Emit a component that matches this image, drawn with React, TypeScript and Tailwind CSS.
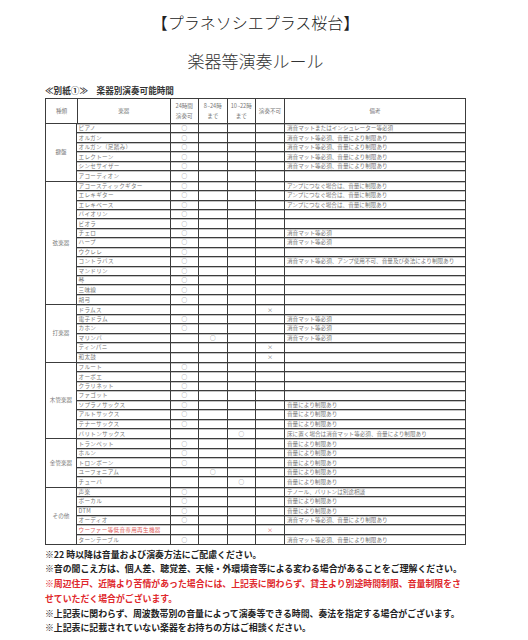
import type { ReactElement } from "react";

type Row = {
  name: string;
  slot?: 0 | 1 | 2; // 0: 24h, 1: 8~24, 2: 10~22
  ng?: boolean;
  note?: string;
  red?: boolean;
};

type Group = { label: string; rows: Row[] };

const MUTE = "消音マット等必須、音量により制限あり";
const AMP = "アンプにつなぐ場合は、音量に制限あり";
const VOL = "音量により制限あり";

const GROUPS: Group[] = [
  {
    label: "鍵盤",
    rows: [
      { name: "ピアノ", slot: 0, note: "消音マットまたはインシュレーター等必須" },
      { name: "オルガン", slot: 0, note: MUTE },
      { name: "オルガン（足踏み）", slot: 0, note: MUTE },
      { name: "エレクトーン", slot: 0, note: MUTE },
      { name: "シンセサイザー", slot: 0, note: MUTE },
      { name: "アコーディオン", slot: 0 },
    ],
  },
  {
    label: "弦楽器",
    rows: [
      { name: "アコースティックギター", slot: 0, note: AMP },
      { name: "エレキギター", slot: 0, note: AMP },
      { name: "エレキベース", slot: 0, note: AMP },
      { name: "バイオリン", slot: 0 },
      { name: "ビオラ", slot: 0 },
      { name: "チェロ", slot: 0, note: "消音マット等必須" },
      { name: "ハープ", slot: 0, note: "消音マット等必須" },
      { name: "ウクレレ", slot: 0 },
      { name: "コントラバス", slot: 0, note: "消音マット等必須、アンプ使用不可、音量及び奏法により制限あり" },
      { name: "マンドリン", slot: 0 },
      { name: "琴", slot: 0 },
      { name: "三味線", slot: 0 },
      { name: "胡弓", slot: 0 },
    ],
  },
  {
    label: "打楽器",
    rows: [
      { name: "ドラムス", ng: true },
      { name: "電子ドラム", slot: 0, note: "消音マット等必須" },
      { name: "カホン", slot: 0, note: "消音マット等必須" },
      { name: "マリンバ", slot: 1, note: "消音マット等必須" },
      { name: "ティンパニ", ng: true },
      { name: "和太鼓", ng: true },
    ],
  },
  {
    label: "木管楽器",
    rows: [
      { name: "フルート", slot: 0 },
      { name: "オーボエ", slot: 0 },
      { name: "クラリネット", slot: 0 },
      { name: "ファゴット", slot: 0 },
      { name: "ソプラノサックス", slot: 0, note: VOL },
      { name: "アルトサックス", slot: 0, note: VOL },
      { name: "テナーサックス", slot: 0, note: VOL },
      { name: "バリトンサックス", slot: 2, note: "床に置く場合は消音マット等必須、音量により制限あり" },
    ],
  },
  {
    label: "金管楽器",
    rows: [
      { name: "トランペット", slot: 0, note: VOL },
      { name: "ホルン", slot: 0, note: VOL },
      { name: "トロンボーン", slot: 0, note: VOL },
      { name: "ユーフォニアム", slot: 1, note: VOL },
      { name: "チューバ", slot: 2, note: VOL },
    ],
  },
  {
    label: "その他",
    rows: [
      { name: "声楽", slot: 0, note: "テノール、バリトンは別途相談" },
      { name: "ボーカル", slot: 0, note: VOL },
      { name: "DTM", slot: 0, note: VOL },
      { name: "オーディオ", slot: 0, note: MUTE },
      { name: "ウーファー等低音専用再生機器", ng: true, red: true },
      { name: "ターンテーブル", slot: 0, note: MUTE },
    ],
  },
];

const COLS = "grid grid-cols-[92.5px_28.5px_28.5px_28.5px_29px_1fr]";

function Mark({ show, glyph, red }: { show: boolean; glyph: string; red?: boolean }): ReactElement {
  return (
    <div
      className={`flex items-center justify-center border-l border-[#3c3c3c] text-[5.6px] leading-[8px] ${
        red ? "text-[#e06060]" : "text-[#7a7a7a]"
      }`}
    >
      {show ? glyph : ""}
    </div>
  );
}

function InstrumentRow({ row }: { row: Row }): ReactElement {
  return (
    <div
      className={`${COLS} h-[9.45px] border-b border-[#3c3c3c] shadow-[inset_0_1px_0_#c4c4c4] last:border-b-0`}
    >
      <div
        className={`flex items-center pl-[1.5px] text-[5.6px] leading-[8px] tracking-[0.3px] whitespace-nowrap ${
          row.red ? "text-[#e06060]" : "text-[#777]"
        }`}
      >
        {row.name}
      </div>
      <Mark show={row.slot === 0} glyph="○" />
      <Mark show={row.slot === 1} glyph="○" />
      <Mark show={row.slot === 2} glyph="○" />
      <Mark show={!!row.ng} glyph="×" red={row.red} />
      <div className="flex items-center border-l border-[#3c3c3c] pl-[2px] text-[5.6px] leading-[8px] text-[#777] whitespace-nowrap">
        {row.note ?? ""}
      </div>
    </div>
  );
}

function HeaderCell({ children, first }: { children: React.ReactNode; first?: boolean }): ReactElement {
  return (
    <div
      className={`flex flex-col items-center justify-center text-center text-[5.6px] leading-[10px] text-[#777] ${
        first ? "" : "border-l border-[#3c3c3c]"
      }`}
    >
      {children}
    </div>
  );
}

export default function App(): ReactElement {
  return (
    <div
      className="min-h-[640px] w-[528px] bg-white text-[#222]"
      style={{ fontFamily: '"Noto Sans CJK JP", "Noto Sans", sans-serif' }}
    >
      <div className="ml-[45px] w-[421px] pt-[12px]">
        <h1 className="text-center text-[16px] leading-[20px] font-light text-[#222]">【プラネソシエプラス桜台】</h1>
        <h2 className="mt-[18px] text-center text-[17px] leading-[22px] font-light text-[#333]">楽器等演奏ルール</h2>
        <p className="mt-[12px] text-[8.6px] leading-[12px] font-bold text-[#333]">≪別紙①≫　楽器別演奏可能時間</p>

        <div className="mt-[2px] border border-[#3c3c3c]">
          <div className="grid h-[25px] grid-cols-[31px_92.5px_28.5px_28.5px_28.5px_29px_1fr] border-b border-[#3c3c3c]">
            <HeaderCell first>種類</HeaderCell>
            <HeaderCell>楽器</HeaderCell>
            <HeaderCell>
              <span>24時間</span>
              <span>演奏可</span>
            </HeaderCell>
            <HeaderCell>
              <span>8~24時</span>
              <span>まで</span>
            </HeaderCell>
            <HeaderCell>
              <span>10~22時</span>
              <span>まで</span>
            </HeaderCell>
            <HeaderCell>演奏不可</HeaderCell>
            <HeaderCell>備考</HeaderCell>
          </div>

          {GROUPS.map((g) => (
            <div key={g.label} className="flex border-b border-[#3c3c3c] last:border-b-0">
              <div className="flex w-[31px] shrink-0 items-center justify-center border-r border-[#3c3c3c] text-[5.6px] text-[#777]">
                {g.label}
              </div>
              <div className="flex-1">
                {g.rows.map((r) => (
                  <InstrumentRow key={r.name} row={r} />
                ))}
              </div>
            </div>
          ))}
        </div>

        <div className="mt-[2.5px] text-[8.9px] leading-[14.7px] font-bold whitespace-nowrap">
          <p className="text-[#222]">※22 時以降は音量および演奏方法にご配慮ください。</p>
          <p className="text-[#222]">※音の聞こえ方は、個人差、聴覚差、天候・外環境音等による変わる場合があることをご理解ください。</p>
          <p className="text-[#e0282c]">
            ※周辺住戸、近隣より苦情があった場合には、上記表に関わらず、貸主より別途時間制限、音量制限をさ
            <br />
            せていただく場合がございます。
          </p>
          <p className="text-[#222]">※上記表に関わらず、周波数帯別の音量によって演奏等できる時間、奏法を指定する場合がございます。</p>
          <p className="text-[#222]">※上記表に記載されていない楽器をお持ちの方はご相談ください。</p>
        </div>
      </div>
    </div>
  );
}
